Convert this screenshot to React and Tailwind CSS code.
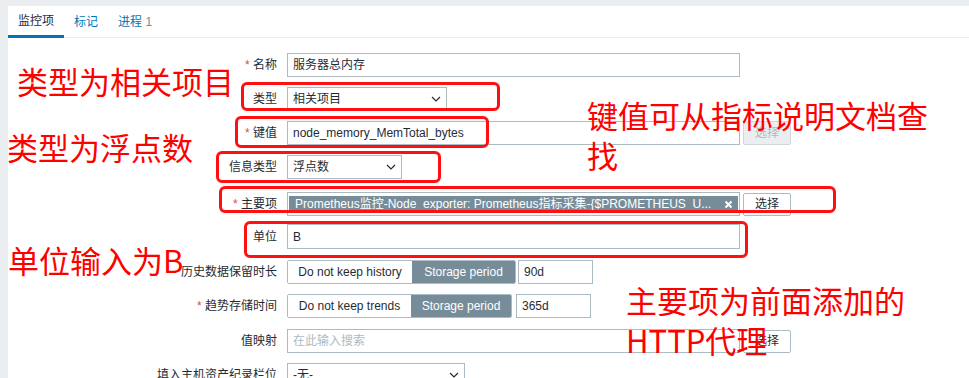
import React from "react";

const Chevron = () => (
  <svg width="10" height="6" viewBox="0 0 10 6" className="shrink-0">
    <polyline points="1,1 5,5 9,1" fill="none" stroke="#1f2c33" strokeWidth="1.2" />
  </svg>
);

function Row({ label, req, mt, children }) {
  return (
    <div className={`flex items-center ${mt}`}>
      <div className="w-[269px] shrink-0 text-right text-[12px] leading-[16px] text-[#1f2c33] whitespace-nowrap">
        {req && <span className="text-[#d64e4e]">* </span>}
        {label}
      </div>
      <div className="ml-[10px] flex items-center">{children}</div>
    </div>
  );
}

const inputCls =
  "h-[24px] border border-[#acbbc2] bg-white px-[5px] flex items-center text-[12px] text-[#1f2c33] whitespace-nowrap";

function Select({ w, value }) {
  return (
    <div className={`${inputCls} ${w} justify-between pr-[5px]`}>
      <span>{value}</span>
      <Chevron />
    </div>
  );
}

function Btn({ disabled }) {
  return (
    <div
      className={
        disabled
          ? "ml-[3px] h-[24px] w-[48px] border border-[#d0d8dc] bg-[#ebeef0] rounded-[2px] flex items-center justify-center text-[12px] text-[#acbbc2]"
          : "ml-[3px] h-[23px] w-[48px] border border-[#acbbc2] bg-white rounded-[2px] flex items-center justify-center text-[12px] text-[#1f2c33]"
      }
    >
      选择
    </div>
  );
}

function Seg({ first, w1, w2 }) {
  return (
    <div className="flex h-[24px] border border-[#acbbc2] rounded-[2px] overflow-hidden text-[12px]">
      <div className={`${w1} flex items-center justify-center bg-white text-[#1f2c33]`}>{first}</div>
      <div className={`${w2} flex items-center justify-center bg-[#768d99] text-white`}>Storage period</div>
    </div>
  );
}

const RedBox = ({ cls }) => (
  <div className={`absolute border-[3px] border-[#ff1010] rounded-[6px] pointer-events-none ${cls}`} />
);

export default function App() {
  return (
    <div className="relative w-[969px] h-[378px] overflow-hidden bg-[#ebeef0] pl-[8px] pt-[6px] font-['Liberation_Sans','Noto_Sans_CJK_SC',sans-serif]">
      <div className="h-[372px] bg-white">
        {/* tabs */}
        <div className="flex h-[32px] border-b border-[#ebeef0] text-[12px]">
          <div className="-mb-px h-[32px] px-[10px] flex items-center border-b-[3px] border-[#0275b8] text-[#1f2c33]">
            监控项
          </div>
          <div className="h-[32px] px-[10px] flex items-center text-[#0275b8]">标记</div>
          <div className="h-[32px] px-[10px] flex items-center text-[#0275b8]">
            进程&nbsp;<span className="text-[#768d99]">1</span>
          </div>
        </div>

        {/* form */}
        <div className="flex flex-col">
          <Row label="名称" req mt="mt-[15px]">
            <div className={`${inputCls} w-[453px]`}>服务器总内存</div>
          </Row>
          <Row label="类型" mt="mt-[10px]">
            <Select w="w-[160px]" value="相关项目" />
          </Row>
          <Row label="键值" req mt="mt-[10px]">
            <div className={`${inputCls} w-[453px]`}>node_memory_MemTotal_bytes</div>
            <Btn disabled />
          </Row>
          <Row label="信息类型" mt="mt-[10px]">
            <Select w="w-[115px]" value="浮点数" />
          </Row>
          <Row label="主要项" req mt="mt-[13px]">
            <div className="h-[24px] w-[453px] border border-[#acbbc2] bg-white flex items-center px-[1px]">
              <div className="h-[16px] w-full bg-[#768d99] text-white text-[12px] flex items-center justify-between pl-[6px] pr-[5px] whitespace-nowrap">
                <span>Prometheus监控-Node_exporter: Prometheus指标采集-{"{"}$PROMETHEUS_U...</span>
                <svg width="9" height="9" viewBox="0 0 9 9">
                  <path d="M1.5 1.5 L7.5 7.5 M7.5 1.5 L1.5 7.5" stroke="white" strokeWidth="2" />
                </svg>
              </div>
            </div>
            <Btn />
          </Row>
          <Row label="单位" mt="mt-[8px]">
            <div className={`${inputCls} w-[453px] h-[25px]`}>B</div>
          </Row>
          <Row label="历史数据保留时长" mt="mt-[11px]">
            <Seg first="Do not keep history" w1="w-[124px]" w2="w-[103px]" />
            <div className={`${inputCls} ml-[2px] w-[75px]`}>90d</div>
          </Row>
          <Row label="趋势存储时间" req mt="mt-[10px]">
            <Seg first="Do not keep trends" w1="w-[123px]" w2="w-[100px]" />
            <div className={`${inputCls} ml-[4px] w-[75px]`}>365d</div>
          </Row>
          <Row label="值映射" mt="mt-[11px]">
            <div className={`${inputCls} w-[453px] text-[#acbbc2]`}>在此输入搜索</div>
            <Btn />
          </Row>
          <Row label="填入主机资产纪录栏位" mt="mt-[10px]">
            <Select w="w-[178px]" value="-无-" />
          </Row>
        </div>
      </div>

      {/* annotation boxes */}
      <RedBox cls="left-[241px] top-[82px] w-[259px] h-[29px]" />
      <RedBox cls="left-[235px] top-[116px] w-[254px] h-[32px]" />
      <RedBox cls="left-[216px] top-[151px] w-[225px] h-[32px]" />
      <RedBox cls="left-[219px] top-[186px] w-[617px] h-[27px]" />
      <RedBox cls="left-[244px] top-[221px] w-[504px] h-[37px]" />

      {/* annotation texts */}
      <div className="absolute font-['Noto_Sans_CJK_SC',sans-serif] text-[31px] leading-[40px] text-[#ff0000] whitespace-nowrap left-[17px] top-[61px]">
        类型为相关项目
      </div>
      <div className="absolute font-['Noto_Sans_CJK_SC',sans-serif] text-[31px] leading-[40px] text-[#ff0000] whitespace-nowrap left-[7px] top-[127px]">
        类型为浮点数
      </div>
      <div className="absolute font-['Noto_Sans_CJK_SC',sans-serif] text-[31px] leading-[40px] text-[#ff0000] whitespace-nowrap left-[587px] top-[95px]">
        键值可从指标说明文档查
        <br />
        找
      </div>
      <div className="absolute font-['Noto_Sans_CJK_SC',sans-serif] text-[31px] leading-[40px] text-[#ff0000] whitespace-nowrap left-[8px] top-[240px]">
        单位输入为B
      </div>
      <div className="absolute font-['Noto_Sans_CJK_SC',sans-serif] text-[31px] leading-[40px] text-[#ff0000] whitespace-nowrap left-[626px] top-[280px]">
        主要项为前面添加的
        <br />
        HTTP代理
      </div>
    </div>
  );
}
